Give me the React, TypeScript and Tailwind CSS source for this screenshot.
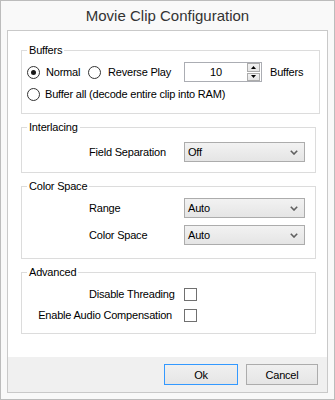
const font = "font-['Liberation_Sans',Arial,sans-serif]";

function Radio({ checked }: { checked?: boolean }) {
  return (
    <span className="flex h-[13px] w-[13px] shrink-0 items-center justify-center rounded-full border border-[#333333] bg-white">
      {checked ? <span className="h-[5px] w-[5px] rounded-full bg-[#1a1a1a]" /> : null}
    </span>
  );
}

function Checkbox() {
  return <span className="block h-[13px] w-[13px] shrink-0 border border-[#707070] bg-white" />;
}

function Select({ value }: { value: string }) {
  return (
    <div className="flex h-[20px] w-[121px] shrink-0 items-center justify-between border border-[#acacac] bg-linear-to-b from-[#f2f2f2] to-[#e5e5e5] pl-[3px] pr-[6px]">
      <span>{value}</span>
      <svg width="8" height="5" viewBox="0 0 8 5">
        <path d="M0.8 0.8 L4 4 L7.2 0.8" fill="none" stroke="#606060" strokeWidth="1.6" />
      </svg>
    </div>
  );
}

function Spinner({ value }: { value: string }) {
  return (
    <div className="ml-[14px] flex h-[20px] w-[78px] shrink-0 items-center border border-[#abadb3] bg-white">
      <span className="flex-1 text-center">{value}</span>
      <div className="mr-px flex h-[18px] w-[13px] flex-col gap-px">
        <span className="flex h-[8.5px] flex-1 items-center justify-center border border-[#acacac] bg-linear-to-b from-[#f2f2f2] to-[#e5e5e5]">
          <svg width="5" height="3" viewBox="0 0 5 3">
            <polygon points="2.5,0 5,3 0,3" fill="#000" />
          </svg>
        </span>
        <span className="flex h-[8.5px] flex-1 items-center justify-center border border-[#acacac] bg-linear-to-b from-[#f2f2f2] to-[#e5e5e5]">
          <svg width="5" height="3" viewBox="0 0 5 3">
            <polygon points="0,0 5,0 2.5,3" fill="#000" />
          </svg>
        </span>
      </div>
    </div>
  );
}

function Group({ title, className, children }: { title: string; className: string; children: React.ReactNode }) {
  return (
    <fieldset className={`border border-[#dcdcdc] pl-[5px] ${className}`}>
      <legend className="px-[2px] leading-[14px]">{title}</legend>
      {children}
    </fieldset>
  );
}

function Row({ label, right, className, children }: { label: string; right?: boolean; className: string; children: React.ReactNode }) {
  return (
    <div className={`flex items-center ${className}`}>
      <span className={right ? "w-[157px] shrink-0 pr-[12px] text-right" : "w-[157px] shrink-0 pl-[62px]"}>{label}</span>
      {children}
    </div>
  );
}

export default function App() {
  return (
    <div className={`${font} flex h-[400px] w-[335px] flex-col whitespace-nowrap border border-[#bcbcbc] bg-[#f9f9f9] text-[11px] leading-[14px] tracking-[-0.2px] text-black`}>
      <div className="flex h-[29px] items-center justify-center text-[15px] tracking-normal text-[#333333]">
        Movie Clip Configuration
      </div>
      <div className="mx-[6px] mb-[6px] flex flex-1 flex-col border border-[#c9c9c9] bg-white">
        <div className="flex-1 pl-[13px] pt-[12px]">
          <Group title="Buffers" className="h-[71px] w-[299px]">
            <div className="mt-[5px] flex h-[20px] items-center">
              <Radio checked />
              <span className="ml-[6px] w-[42px] shrink-0">Normal</span>
              <Radio />
              <span className="ml-[7px] w-[62px] shrink-0">Reverse Play</span>
              <Spinner value="10" />
              <span className="ml-[8px]">Buffers</span>
            </div>
            <div className="mt-[4px] flex h-[16px] items-center">
              <Radio />
              <span className="ml-[5px]">Buffer all (decode entire clip into RAM)</span>
            </div>
          </Group>

          <Group title="Interlacing" className="mt-[6px] h-[53px] w-[295px]">
            <Row label="Field Separation" className="mt-[8px] h-[20px]">
              <Select value="Off" />
            </Row>
          </Group>

          <Group title="Color Space" className="mt-[6px] h-[80px] w-[295px]">
            <Row label="Range" className="mt-[5px] h-[20px]">
              <Select value="Auto" />
            </Row>
            <Row label="Color Space" className="mt-[7px] h-[20px]">
              <Select value="Auto" />
            </Row>
          </Group>

          <Group title="Advanced" className="mt-[6px] h-[69px] w-[295px]">
            <Row label="Disable Threading" className="mt-[7px] h-[16px]">
              <Checkbox />
            </Row>
            <Row label="Enable Audio Compensation" right className="mt-[5px] h-[16px]">
              <Checkbox />
            </Row>
          </Group>
        </div>
        <div className="flex h-[35px] items-start justify-end gap-[8px] bg-[#f0f0f0] pr-[9px] pt-[7px]">
          <button className="h-[21px] w-[74px] border border-[#3399ff] bg-linear-to-b from-[#f0f0f0] to-[#e5e5e5]">Ok</button>
          <button className="h-[21px] w-[72px] border border-[#acacac] bg-linear-to-b from-[#f0f0f0] to-[#e5e5e5]">Cancel</button>
        </div>
      </div>
    </div>
  );
}
